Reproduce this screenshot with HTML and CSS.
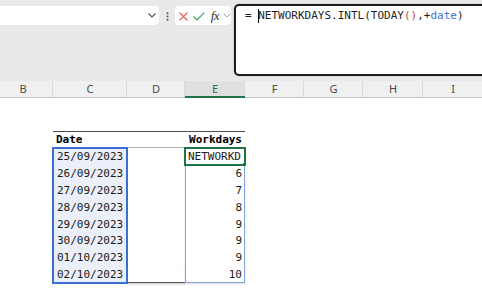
FILE: index.html
```html
<!DOCTYPE html>
<html>
<head>
<meta charset="utf-8">
<link rel="stylesheet" href="styles.css">
</head>
<body>
<div class="toolbar">
  <div class="namebox">
    <svg class="chev" width="8" height="5" viewBox="0 0 8 5"><polyline points="0.5,0.5 4,4 7.5,0.5" fill="none" stroke="#555" stroke-width="1.1"/></svg>
  </div>
  <div class="dots">
    <svg width="3" height="9" viewBox="0 0 3 9"><circle cx="1.5" cy="1.2" r="1" fill="#555"/><circle cx="1.5" cy="4.5" r="1" fill="#555"/><circle cx="1.5" cy="7.8" r="1" fill="#555"/></svg>
  </div>
  <div class="fxgroup">
    <svg class="ico-x" width="9" height="9" viewBox="0 0 9 9"><path d="M0.5 0.5 L8.5 8.5 M8.5 0.5 L0.5 8.5" stroke="#e0504c" stroke-width="1.2" fill="none"/></svg>
    <svg class="ico-ok" width="12" height="9" viewBox="0 0 12 9"><polyline points="0.5,4.5 4,8 11.5,0.5" stroke="#3fa652" stroke-width="1.2" fill="none"/></svg>
    <span class="fx">fx</span>
    <svg class="chev2" width="8" height="5" viewBox="0 0 8 5"><polyline points="0.5,0.5 4,4 7.5,0.5" fill="none" stroke="#9a9a9a" stroke-width="1"/></svg>
  </div>
  <div class="formula"><span>= </span><span class="caret"></span>NETWORKDAYS.INTL(TODAY<span class="paren">()</span>,+<span class="ref">date</span>)</div>
</div>
<div class="colheads">
  <div class="ch first">B</div>
  <div class="ch">C</div>
  <div class="ch">D</div>
  <div class="ch active">E</div>
  <div class="ch">F</div>
  <div class="ch">G</div>
  <div class="ch">H</div>
  <div class="ch">I</div>
</div>
<div class="sheet">
  <div class="table">
    <div class="col col-c">
      <div class="hcell">Date</div>
      <div class="data sel-c">
        <div class="cell">25/09/2023</div>
        <div class="cell">26/09/2023</div>
        <div class="cell">27/09/2023</div>
        <div class="cell">28/09/2023</div>
        <div class="cell">29/09/2023</div>
        <div class="cell">30/09/2023</div>
        <div class="cell">01/10/2023</div>
        <div class="cell">02/10/2023</div>
      </div>
    </div>
    <div class="col col-d">
      <div class="hcell"></div>
      <div class="data plain">
        <div class="cell"></div>
        <div class="cell"></div>
        <div class="cell"></div>
        <div class="cell"></div>
        <div class="cell"></div>
        <div class="cell"></div>
        <div class="cell"></div>
        <div class="cell last"></div>
      </div>
    </div>
    <div class="col col-e">
      <div class="hcell right">Workdays</div>
      <div class="data sel-e">
        <div class="cell active-cell">NETWORKD</div>
        <div class="cell right">6</div>
        <div class="cell right">7</div>
        <div class="cell right">8</div>
        <div class="cell right">9</div>
        <div class="cell right">9</div>
        <div class="cell right">9</div>
        <div class="cell right">10</div>
      </div>
    </div>
  </div>
</div>
</body>
</html>
```
FILE: styles.css
```css
body {
  margin: 0;
  width: 482px;
  height: 304px;
  overflow: hidden;
  background: #ffffff;
  font-family: "Noto Sans", "Open Sans", sans-serif;
}

.toolbar {
  display: flex;
  align-items: flex-start;
  height: 81px;
  background: #e9e9ec;
  overflow: hidden;
}

.namebox {
  margin: 6px 0 0 -4px;
  width: 163px;
  height: 19px;
  box-sizing: border-box;
  background: #ffffff;
  border-radius: 4px;
  display: flex;
  align-items: center;
  justify-content: flex-end;
  padding-right: 3px;
}

.dots {
  width: 16px;
  margin-top: 12px;
  display: flex;
  justify-content: center;
}

.fxgroup {
  margin-top: 6px;
  width: 56px;
  height: 19px;
  box-sizing: border-box;
  background: #ffffff;
  border-radius: 4px;
  display: flex;
  align-items: center;
  padding-left: 4px;
}

.ico-x { margin-top: 1px; }
.ico-ok { margin-left: 5px; margin-top: 1px; }

.fx {
  margin-left: 6px;
  font-family: "Liberation Serif", serif;
  font-style: italic;
  font-size: 13px;
  line-height: 14px;
  color: #333333;
  letter-spacing: -0.5px;
}

.chev2 { margin-left: 4px; }

.formula {
  margin: 4px -20px 0 3px;
  flex: 1;
  height: 72px;
  box-sizing: border-box;
  border: 2px solid #1c1c1c;
  border-radius: 5px;
  background: #ffffff;
  box-shadow: 0 0 2px rgba(0, 0, 0, 0.25);
  padding: 3px 0 0 9px;
  font-family: "DejaVu Sans Mono", "Liberation Mono", monospace;
  font-size: 11px;
  line-height: 14px;
  color: #1f1f1f;
  white-space: pre;
}

.caret {
  display: inline-block;
  width: 1px;
  height: 14px;
  margin-right: -1px;
  background: #000000;
  vertical-align: top;
}

.paren { color: #d2423a; }
.ref { color: #3a72d8; }

.colheads {
  display: grid;
  grid-template-columns: 53px 74px 58px 60px 59px 59px 60px 60px;
  height: 17px;
  background: #f0f0f0;
}

.ch {
  box-shadow: inset 0 -1px #c6c6c6, inset -1px 0 #dadada;
  text-align: center;
  font-size: 11px;
  line-height: 16px;
  color: #4a4a4a;
}

.ch.first { padding-right: 7px; }

.ch.active {
  background: #e0e0e0;
  color: #217346;
  box-shadow: inset 0 -2px #217346, inset -1px 0 #dadada;
}

.sheet {
  padding-top: 33px;
}

.table {
  margin-left: 53px;
  display: flex;
  font-family: "DejaVu Sans Mono", "Liberation Mono", monospace;
  font-size: 11px;
  color: #1a1a1a;
}

.col {
  display: flex;
  flex-direction: column;
}

.col-c { width: 74px; }
.col-d { width: 58px; }
.col-e { width: 60px; }

.hcell {
  height: 17px;
  box-sizing: border-box;
  border-top: 1px solid #4d4d4d;
  border-bottom: 1px solid #b4b4b4;
  padding: 1px 3px 0 3px;
  line-height: 14px;
  font-weight: bold;
  color: #000000;
}

.data {
  display: flex;
  flex-direction: column;
}

.cell {
  height: 16.875px;
  line-height: 17px;
  padding: 0 3px 0 4px;
  white-space: nowrap;
  overflow: hidden;
}

.right {
  text-align: right;
  padding-right: 3px;
}

.sel-c {
  background: #eaeff9;
  outline: 2px solid #3a6ed3;
  outline-offset: -1px;
  position: relative;
  z-index: 1;
}

.plain .last {
  box-shadow: inset 0 -1px #595959, 0 1px 2px rgba(0, 0, 0, 0.25);
}

.sel-e {
  outline: 1px solid #86a4e2;
  outline-offset: -1px;
  box-shadow: 0 1px 2px rgba(0, 0, 0, 0.15);
}

.active-cell {
  position: relative;
  overflow: visible;
  padding-left: 3px;
  outline: 2px solid #217346;
  outline-offset: -1px;
  z-index: 2;
}

.active-cell::after {
  content: "";
  position: absolute;
  right: -1px;
  bottom: -1px;
  width: 3px;
  height: 3px;
  background: #217346;
}
```
